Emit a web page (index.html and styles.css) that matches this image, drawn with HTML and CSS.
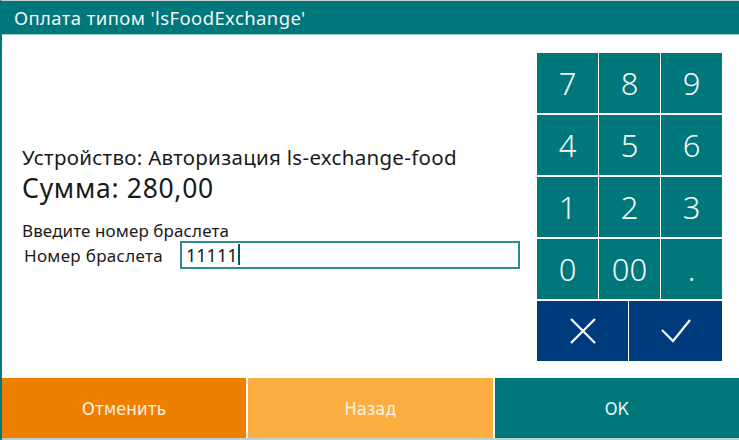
FILE: index.html
```html
<!DOCTYPE html>
<html lang="ru">
<head>
    <meta charset="UTF-8">
    <title>Оплата</title>
    <link rel="stylesheet" href="styles.css">
</head>
<body>
    <div class="window">
        <div class="titlebar">Оплата типом 'lsFoodExchange'</div>

        <div class="content">
            <div class="info">
                <div class="device">Устройство: Авторизация ls-exchange-food</div>
                <div class="sum">Сумма: 280,00</div>
                <div class="prompt">Введите номер браслета</div>
                <div class="field">
                    <span class="label">Номер браслета</span>
                    <div class="input">11111<span class="caret"></span></div>
                </div>
            </div>

            <div class="keypad">
                <div class="key">7</div>
                <div class="key">8</div>
                <div class="key">9</div>
                <div class="key">4</div>
                <div class="key">5</div>
                <div class="key">6</div>
                <div class="key">1</div>
                <div class="key">2</div>
                <div class="key">3</div>
                <div class="key">0</div>
                <div class="key">00</div>
                <div class="key">.</div>
                <div class="actions">
                    <div class="action">
                        <svg width="26" height="26" viewBox="0 0 26 26"><path d="M1 1 L25 25 M25 1 L1 25" stroke="#fff" stroke-width="2.2" fill="none"/></svg>
                    </div>
                    <div class="action">
                        <svg width="30" height="24" viewBox="0 0 30 24"><path d="M1 11 L12 22 L29 1" stroke="#fff" stroke-width="2.2" fill="none"/></svg>
                    </div>
                </div>
            </div>
        </div>

        <div class="footer">
            <div class="btn cancel">Отменить</div>
            <div class="btn back">Назад</div>
            <div class="btn ok">ОК</div>
        </div>
    </div>
</body>
</html>
```

FILE: styles.css
```css
body {
    margin: 0;
    padding: 0;
    background: #ffffff;
    font-family: 'Noto Sans', 'Open Sans', sans-serif;
}
.window {
    width: 739px;
    height: 440px;
    box-sizing: border-box;
    border-left: 2px solid #00777b;
    border-top: 1px solid #c8d0d0;
    display: flex;
    flex-direction: column;
    background: #fff;
}
.titlebar {
    height: 33px;
    background: #00777b;
    color: #f2f7f7;
    font-size: 18.5px;
    letter-spacing: 0.4px;
    line-height: 33px;
    padding-left: 12px;
    border-bottom: 1px solid #9cc6c7;
}
.content {
    flex: 1;
    display: flex;
    align-items: center;
    justify-content: space-between;
    padding: 0 17px 0 20px;
}
.info {
    color: #1a1a1a;
}
.device {
    font-size: 20.5px;
    letter-spacing: 0.3px;
    line-height: 24px;
}
.sum {
    font-size: 26.5px;
    letter-spacing: 0.7px;
    line-height: 30px;
    margin-top: 4px;
}
.prompt {
    font-size: 17px;
    letter-spacing: 0.1px;
    line-height: 20px;
    margin-top: 18px;
}
.field {
    display: flex;
    align-items: center;
}
.label {
    font-size: 17px;
    letter-spacing: 0.3px;
    width: 156px;
    padding: 2px 0 0 2px;
}
.input {
    width: 332px;
    height: 24px;
    border: 2px solid #2e8c8e;
    font-size: 18px;
    line-height: 24px;
    padding-left: 4px;
    display: flex;
    align-items: center;
}
.caret {
    display: inline-block;
    width: 2px;
    height: 21px;
    background: #00595c;
    margin-left: 1px;
}
.keypad {
    display: grid;
    grid-template-columns: repeat(3, 61px);
    grid-auto-rows: 60px;
    column-gap: 1px;
    row-gap: 2px;
}
.key {
    background: #00777b;
    color: #f4f9f9;
    font-size: 31px;
    font-weight: 300;
    display: flex;
    align-items: center;
    justify-content: center;
}
.actions {
    grid-column: 1 / 4;
    display: grid;
    grid-template-columns: 91px 93px;
    column-gap: 1px;
}
.action {
    background: #003c7d;
    display: flex;
    align-items: center;
    justify-content: center;
}
.footer {
    display: flex;
    gap: 2px;
    height: 60px;
    border-bottom: 2px solid #b7d3d4;
}
.btn {
    flex: 1;
    color: #fbf3e6;
    font-family: 'DejaVu Sans', sans-serif;
    font-stretch: condensed;
    font-size: 18px;
    display: flex;
    align-items: center;
    justify-content: center;
}
.cancel {
    background: #ee7f00;
}
.back {
    background: #fdae40;
}
.ok {
    background: #00777b;
    color: #e8f3f3;
}
```
